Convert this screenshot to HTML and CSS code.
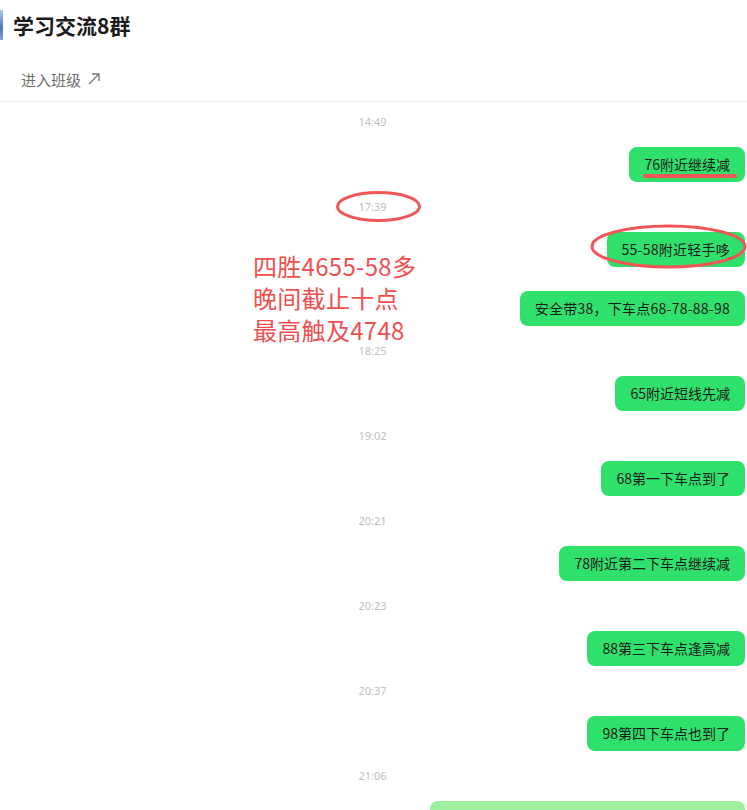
FILE: index.html
```html
<!DOCTYPE html>
<html lang="zh-CN">
<head>
  <meta charset="UTF-8">
  <meta name="viewport" content="width=device-width, initial-scale=1.0">
  <title>学习交流8群</title>
  <link rel="stylesheet" href="styles.css">
</head>
<body>
  <header class="header">
    <div class="title-row">
      <span class="avatar"></span>
      <h1 class="title">学习交流8群</h1>
    </div>
    <div class="link-row">
      <span>进入班级</span>
      <svg class="arrow" viewBox="0 0 14 14" width="14" height="14">
        <path d="M2 12 L12 2 M5 2 H12 V9" fill="none" stroke="#777" stroke-width="1.3"/>
      </svg>
    </div>
  </header>

  <main class="chat">
    <div class="time">14:49</div>
    <div class="row"><div class="bubble">76附近继续减<span class="underline"></span></div></div>

    <div class="time">17:39</div>
    <div class="row"><div class="bubble wide">55-58附近轻手哆</div></div>
    <div class="row next"><div class="bubble wide">安全带38，下车点68-78-88-98</div></div>

    <div class="time">18:25</div>
    <div class="row"><div class="bubble">65附近短线先减</div></div>

    <div class="time">19:02</div>
    <div class="row"><div class="bubble">68第一下车点到了</div></div>

    <div class="time">20:21</div>
    <div class="row"><div class="bubble">78附近第二下车点继续减</div></div>

    <div class="time">20:23</div>
    <div class="row"><div class="bubble">88第三下车点逢高减</div></div>

    <div class="time">20:37</div>
    <div class="row"><div class="bubble">98第四下车点也到了</div></div>

    <div class="time">21:06</div>
    <div class="row"><div class="bubble pending"></div></div>

    <!-- hand-drawn marks over the chat -->
    <svg class="mark mark-time" viewBox="0 0 85 31" width="85" height="31">
      <ellipse cx="42.5" cy="15.5" rx="41" ry="14" fill="none" stroke="#f25555" stroke-width="3"/>
    </svg>
    <svg class="mark mark-bubble" viewBox="0 0 157 45" width="157" height="45">
      <ellipse cx="78.5" cy="22.5" rx="76.5" ry="20.5" fill="none" stroke="#f25555" stroke-width="3"/>
    </svg>
    <div class="note">四胜4655-58多<br>晚间截止十点<br>最高触及4748</div>
  </main>
</body>
</html>
```

FILE: styles.css
```css
body {
  margin: 0;
  background: #fff;
  font-family: "Noto Sans CJK SC", "Noto Sans", sans-serif;
  color: #1a1a1a;
  overflow: hidden;
}
.header {
  border-bottom: 1px solid #ececec;
}
.title-row {
  display: flex;
  align-items: center;
  gap: 10px;
  height: 50px;
}
.avatar {
  width: 3px;
  height: 30px;
  background: linear-gradient(180deg, #a9c6ee, #4d78c8 60%, #8aa0d8);
}
.title {
  margin: 0;
  font-size: 21px;
  font-weight: 700;
  color: #1b1b1b;
}
.link-row {
  display: flex;
  align-items: center;
  gap: 6px;
  height: 43px;
  padding: 8px 0 0 21px;
  font-size: 15px;
  color: #6f6f6f;
}
.arrow {
  margin-top: -2px;
}
.chat {
  position: relative;
  display: flex;
  flex-direction: column;
  padding-right: 2px;
}
.time {
  padding: 19px 0;
  line-height: 12px;
  text-align: center;
  font-family: "Noto Sans", sans-serif;
  font-size: 11px;
  color: #c0c0c0;
}
.time:first-child {
  padding-top: 14px;
}
.row {
  display: flex;
  justify-content: flex-end;
}
.row.next {
  margin-top: 24px;
}
.bubble {
  position: relative;
  height: 35px;
  line-height: 35px;
  padding: 0 15px;
  border-radius: 8px;
  background: #2fe06b;
  font-size: 14px;
  color: #1c1c1c;
  white-space: nowrap;
}
.bubble.wide {
  letter-spacing: 0.25px;
}
.bubble.pending {
  width: 285px;
  background: #9ef09f;
}
.underline {
  position: absolute;
  left: 14px;
  top: 27px;
  width: 94px;
  height: 4px;
  border-radius: 2px;
  background: #f25555;
}
.mark {
  position: absolute;
  display: block;
}
.mark-time {
  left: 336px;
  top: 89px;
}
.mark-bubble {
  left: 590px;
  top: 122px;
}
.note {
  position: absolute;
  left: 253px;
  top: 148px;
  font-size: 24px;
  line-height: 32px;
  letter-spacing: 0.3px;
  color: #f04f4f;
}
```
